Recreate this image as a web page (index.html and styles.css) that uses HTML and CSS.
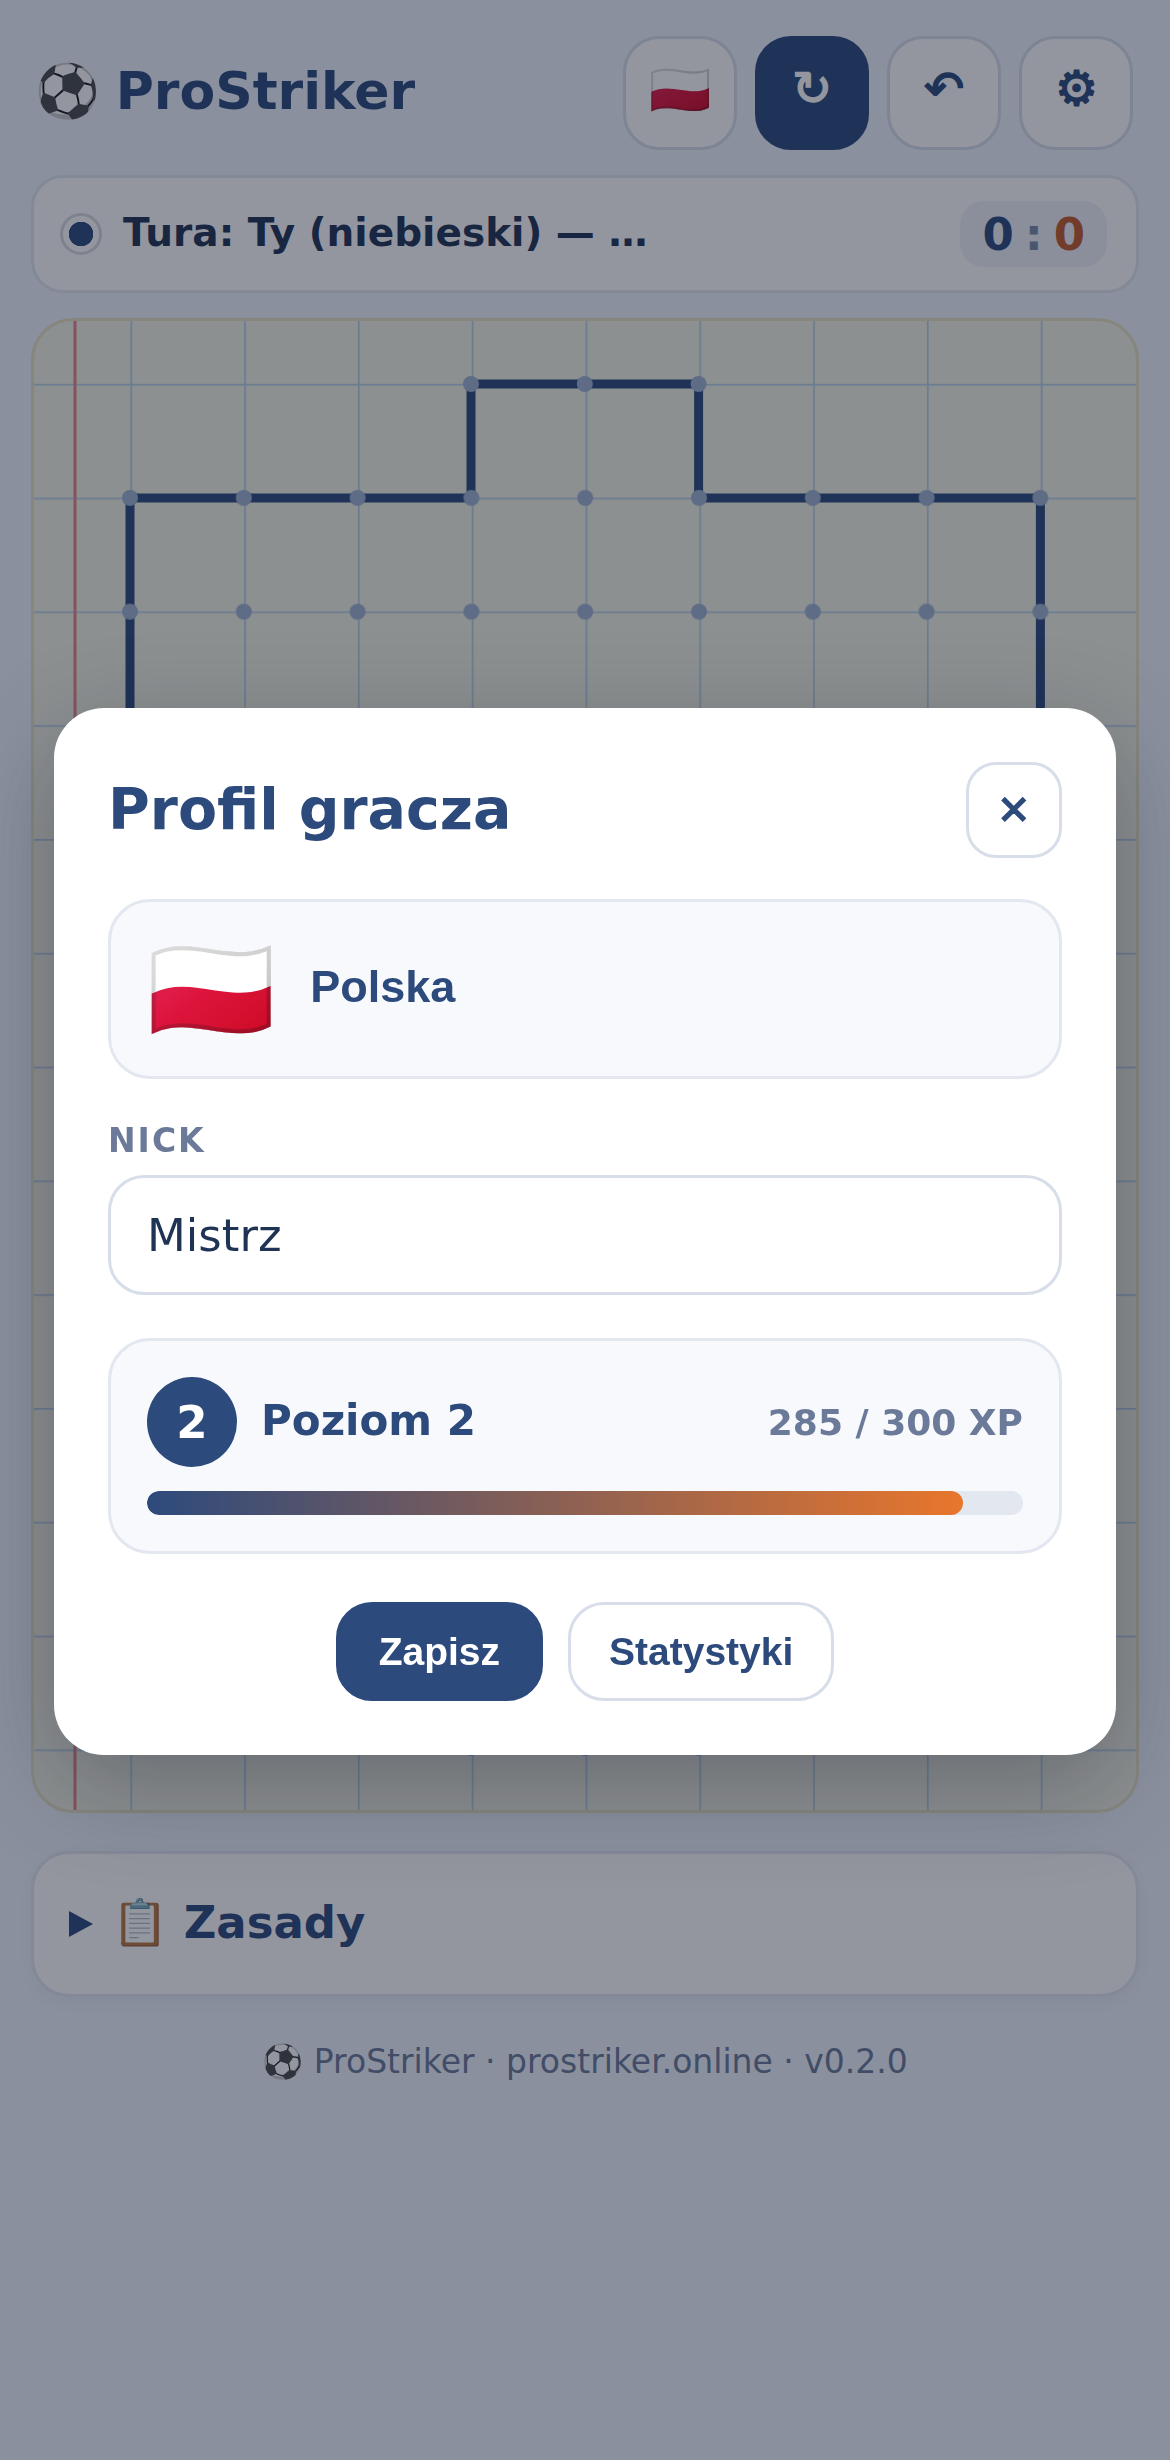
FILE: index.html
```html
<!DOCTYPE html>
<html lang="pl">
<head>
    <meta charset="utf-8">
    <title>ProStriker</title>
    <link rel="stylesheet" href="styles.css">
</head>
<body>
<div class="app">
    <header class="top">
        <h1 class="logo"><span class="logo_ball">⚽</span>ProStriker</h1>
        <div class="tools">
            <button class="tool tool_flag">🇵🇱</button>
            <button class="tool tool_on">↻</button>
            <button class="tool">↶</button>
            <button class="tool">⚙</button>
        </div>
    </header>

    <div class="status">
        <span class="turn_dot"></span>
        <span class="turn_text">Tura: Ty (niebieski) — …</span>
        <span class="score"><b class="me">0</b><b class="sep">:</b><b class="cpu">0</b></span>
    </div>

    <div class="board">
        <svg class="pitch" viewBox="34 321 1102 1489" width="1102" height="1489">
            <defs>
                <pattern id="grid" x="16.5" y="270" width="113.8" height="113.8" patternUnits="userSpaceOnUse">
                    <path class="grid_line" d="M0 0H113.8M0 0V113.8"/>
                </pattern>
                <pattern id="dots" x="73.1" y="441" width="113.8" height="113.8" patternUnits="userSpaceOnUse">
                    <circle class="dot" cx="56.9" cy="56.9" r="8"/>
                </pattern>
            </defs>
            <rect x="34" y="321" width="1102" height="1489" fill="url(#grid)"/>
            <path class="margin_line" d="M75 321V1810"/>
            <path class="wall" d="M130 1635V498H471V384H698.6V498H1040.4V1635H698.6V1748H471V1635Z"/>
            <rect x="73.1" y="441" width="1024" height="1252" fill="url(#dots)"/>
            <circle class="dot" cx="471" cy="384" r="8"/>
            <circle class="dot" cx="584.8" cy="384" r="8"/>
            <circle class="dot" cx="698.6" cy="384" r="8"/>
            <circle class="dot" cx="471" cy="1748" r="8"/>
            <circle class="dot" cx="584.8" cy="1748" r="8"/>
            <circle class="dot" cx="698.6" cy="1748" r="8"/>
        </svg>
    </div>

    <div class="rules">
        <span class="rules_arrow"></span>
        <span class="rules_title">📋 Zasady</span>
    </div>

    <p class="foot">⚽ ProStriker · prostriker.online · v0.2.0</p>
</div>

<div class="overlay">
    <div class="modal">
        <div class="modal_head">
            <h2>Profil gracza</h2>
            <button class="close">✕</button>
        </div>

        <div class="country">
            <span class="country_flag">🇵🇱</span>
            <span class="country_name">Polska</span>
        </div>

        <label class="nick_label" for="nick">NICK</label>
        <input class="nick" id="nick" value="Mistrz">

        <div class="level">
            <div class="level_row">
                <span class="level_num">2</span>
                <span class="level_name">Poziom 2</span>
                <span class="level_xp">285 / 300 XP</span>
            </div>
            <div class="bar"><div class="bar_fill" style="width: 93.2%"></div></div>
        </div>

        <div class="actions">
            <button class="btn btn_main">Zapisz</button>
            <button class="btn">Statystyki</button>
        </div>
    </div>
</div>
</body>
</html>
```

FILE: styles.css
```css
*{margin:0;padding:0;box-sizing:border-box;}
html,body{height:100%;}
body{
    background:#f0f5fd;
    font-family:"DejaVu Sans","Noto Color Emoji",sans-serif;
    color:#2d4a7c;
    overflow:hidden;
}
button{font-family:"Liberation Sans",sans-serif;color:inherit;cursor:pointer;}

.app{padding:36px 31px 0;}

.top{display:flex;justify-content:space-between;align-items:flex-start;padding:0 6px 0 4px;}
.logo{font-size:52px;font-weight:700;line-height:111px;display:flex;align-items:center;gap:16px;color:#2d4a7c;}
.logo_ball{font-size:52px;font-weight:400;}
.tools{display:flex;gap:18px;}
.tool{
    width:114px;height:114px;
    background:#fff;
    border:3px solid #d7deea;
    border-radius:36px;
    font-size:48px;
    font-weight:700;
    line-height:1;
    padding-bottom:8px;
}
.tool_flag{font-size:50px;font-weight:400;padding-bottom:7px;}
.tool_on{background:#2d4a7c;border-color:#2d4a7c;color:#fff;}

.status{
    margin-top:25px;
    height:118px;
    display:flex;
    align-items:center;
    background:#fff;
    border:3px solid #e2e7f0;
    border-radius:32px;
    padding:0 29px 0 26px;
}
.turn_dot{
    width:42px;height:42px;
    border-radius:50%;
    border:3px solid #d7dadc;
    background:radial-gradient(circle,#2d4a7c 12px,#fff 12.5px);
}
.turn_text{flex:1;margin:0 0 3px 21px;font-size:39px;font-weight:700;color:#1f3354;white-space:nowrap;}
.score{
    display:flex;align-items:center;gap:11px;
    height:66px;padding:0 22px;
    background:#f0f3f9;
    border-radius:24px;
    font-size:45px;
}
.me{color:#2d4a7c;}
.sep{color:#7a8ba8;}
.cpu{color:#c45c2c;}

.board{
    margin-top:25px;
    height:1495px;
    background:#f4f4e4;
    border:3px solid #e8e2c4;
    border-radius:42px;
    overflow:hidden;
}
.pitch{display:block;}
.grid_line{fill:none;stroke:#b8cfe8;stroke-width:3.5;}
.margin_line{fill:none;stroke:#e88488;stroke-width:3;}
.wall{fill:none;stroke:#2d4a7c;stroke-width:9;}
.dot{fill:#9fb2d2;}

.rules{
    margin-top:38px;
    height:146px;
    display:flex;
    align-items:center;
    background:#fff;
    border:3px solid #e2e7f0;
    border-radius:38px;
    padding:0 0 0 35px;
    box-shadow:0 6px 18px rgba(45,74,124,.06);
}
.rules_arrow{border-left:24px solid #2d4a7c;border-top:13px solid transparent;border-bottom:13px solid transparent;}
.rules_title{margin:0 0 3px 19px;font-size:45px;font-weight:700;}

.foot{margin-top:45px;text-align:center;font-size:33px;color:#6b7a99;}

/* profil gracza */
.overlay{
    position:fixed;
    inset:0;
    display:flex;
    align-items:center;
    justify-content:center;
    padding-top:3px;
    background:rgba(15,23,42,.45);
}
.modal{
    width:1062px;
    padding:54px;
    background:#fff;
    border-radius:50px;
    box-shadow:0 30px 100px rgba(15,23,42,.3);
}
.modal_head{display:flex;justify-content:space-between;align-items:center;}
.modal_head h2{font-size:57px;font-weight:700;color:#2d4a7c;margin-bottom:2px;}
.close{
    width:96px;height:96px;
    background:#fff;
    border:3px solid #d7deea;
    border-radius:30px;
    font-size:40px;
    font-weight:700;
}
.country{
    margin-top:41px;
    height:180px;
    display:flex;
    align-items:center;
    gap:35px;
    padding:0 36px;
    background:#f7f9fd;
    border:3px solid #e2e7f0;
    border-radius:42px;
}
.country_flag{font-size:103px;line-height:1;font-weight:400;}
.country_name{font-family:"Liberation Sans",Arial,sans-serif;font-size:45px;font-weight:700;margin-bottom:5px;}
.nick_label{display:block;margin-top:42px;font-size:33px;font-weight:700;letter-spacing:2px;color:#6b7a99;}
.nick{
    display:block;
    width:100%;
    height:120px;
    margin-top:15px;
    padding:0 36px;
    background:#fff;
    border:3px solid #d7deea;
    border-radius:36px;
    font-family:inherit;
    font-size:45px;
    color:#1f3354;
    outline:none;
}
.level{
    margin-top:43px;
    padding:36px 36px 36px;
    background:#f7f9fd;
    border:3px solid #e2e7f0;
    border-radius:42px;
}
.level_row{display:flex;align-items:center;}
.level_num{
    width:90px;height:90px;
    border-radius:50%;
    background:#2d4a7c;
    color:#fff;
    display:flex;align-items:center;justify-content:center;
    font-size:45px;
    font-weight:700;
}
.level_name{flex:1;margin:0 0 3px 24px;font-size:42px;font-weight:700;}
.level_xp{font-size:36px;font-weight:700;color:#6b7a99;}
.bar{margin-top:24px;height:24px;background:#e2e7f0;border-radius:12px;overflow:hidden;}
.bar_fill{height:100%;border-radius:12px;background:linear-gradient(90deg,#2d4a7c,#e8762c);}
.actions{display:flex;justify-content:center;gap:25px;margin-top:48px;}
.btn{
    height:99px;
    padding:0 38px;
    background:#fff;
    border:3px solid #d7deea;
    border-radius:36px;
    font-size:39px;
    font-weight:700;
}
.btn_main{padding:0 40px;background:#2d4a7c;border-color:#2d4a7c;color:#fff;}
```
